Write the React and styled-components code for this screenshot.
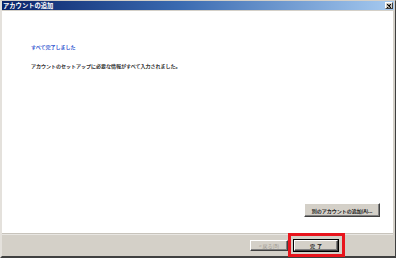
import React from "react";
import styled, { createGlobalStyle } from "styled-components";

const Global = createGlobalStyle`
  html, body { margin: 0; padding: 0; background: #d4d0c8; }
  body { font-family: "Noto Sans CJK JP", "Noto Sans", sans-serif; }
`;

const Window = styled.div`
  box-sizing: border-box;
  width: 396px;
  height: 258px;
  background: #d4d0c8;
  border-top: 1px solid #d4d0c8;
  border-left: 2px solid #e4e1dc;
  border-right: 1px solid #404040;
  border-bottom: 2px solid #404040;
  display: flex;
  flex-direction: column;
  padding-right: 2px;
`;

const TitleBar = styled.div`
  height: 9px;
  flex: none;
  background: linear-gradient(to right, #0a246a 0%, #3a6ab0 45%, #a6caf0 100%);
  display: flex;
  align-items: center;
  justify-content: space-between;
  padding: 0 1px 0 1px;
  margin-right: -1px;
`;

const Title = styled.span`
  color: #fff;
  font-weight: bold;
  font-size: 6.3px;
  line-height: 9px;
  white-space: nowrap;
`;

const CloseBtn = styled.div`
  width: 8px;
  height: 7px;
  box-sizing: border-box;
  background: #d4d0c8;
  border-top: 1px solid #fff;
  border-left: 1px solid #fff;
  border-right: 1px solid #404040;
  border-bottom: 1px solid #404040;
  display: flex;
  align-items: center;
  justify-content: center;
`;

const Content = styled.div`
  flex: 1;
  margin-top: 1px;
  background: #fff;
  display: flex;
  flex-direction: column;
  padding: 0 0 0 29px;
`;

const Heading = styled.div`
  margin-top: 32px;
  color: #3558d0;
  font-size: 5px;
  line-height: 7px;
  white-space: nowrap;
  text-shadow: 0 0 0.3px #3558d0;
`;

const Message = styled.div`
  margin-top: 12px;
  color: #333;
  font-size: 5px;
  line-height: 7px;
  white-space: nowrap;
  text-shadow: 0 0 0.3px #333;
`;

const Spacer = styled.div`
  flex: 1;
`;

const ContentFooter = styled.div`
  display: flex;
  justify-content: flex-end;
  padding-right: 13px;
  margin-bottom: 16px;
`;

const Button = styled.div`
  box-sizing: border-box;
  height: ${(p) => p.$h || 14}px;
  width: ${(p) => p.$w}px;
  background: #d4d0c8;
  border-top: 1px solid #fff;
  border-left: 1px solid #fff;
  border-right: 1px solid #404040;
  border-bottom: 1px solid #404040;
  box-shadow: inset -1px -1px 0 #808080;
  display: flex;
  align-items: center;
  justify-content: center;
  font-size: 5px;
  letter-spacing: ${(p) => (p.$spaced ? "2px" : "0")};
  text-indent: ${(p) => (p.$spaced ? "2px" : "0")};
  color: ${(p) => (p.$disabled ? "#9a968e" : "#222")};
  text-shadow: ${(p) => (p.$disabled ? "none" : "0 0 0.3px #222")};
  white-space: nowrap;
  outline: ${(p) => (p.$default ? "1px solid #000" : "none")};
`;

const Separator = styled.div`
  height: 2px;
  flex: none;
  background: #e8e6e2;
  border-top: 1px solid #c8c4bc;
  box-sizing: border-box;
`;

const Footer = styled.div`
  height: 21px;
  flex: none;
  display: flex;
  align-items: center;
  justify-content: flex-end;
  padding-right: 55px;
  gap: 6px;
  position: relative;
`;

const Highlight = styled.div`
  position: absolute;
  left: 286px;
  top: -2px;
  width: 57px;
  height: 24px;
  border: 3px solid #e8141c;
  box-sizing: border-box;
  pointer-events: none;
`;

export default function App() {
  return (
    <>
      <Global />
      <Window>
        <TitleBar>
          <Title>アカウントの追加</Title>
          <CloseBtn>
            <svg width="4" height="4" viewBox="0 0 4 4">
              <path d="M0 0L4 4M4 0L0 4" stroke="#000" strokeWidth="1.1" />
            </svg>
          </CloseBtn>
        </TitleBar>
        <Content>
          <Heading>すべて完了しました</Heading>
          <Message>アカウントのセットアップに必要な情報がすべて入力されました。</Message>
          <Spacer />
          <ContentFooter>
            <Button $w={76}>別のアカウントの追加(A)...</Button>
          </ContentFooter>
        </Content>
        <Separator />
        <Footer>
          <Button $w={38} $h={11} $disabled>
            &lt; 戻る(B)
          </Button>
          <Button $w={44} $h={11} $default $spaced>
            完了
          </Button>
          <Highlight />
        </Footer>
      </Window>
    </>
  );
}
